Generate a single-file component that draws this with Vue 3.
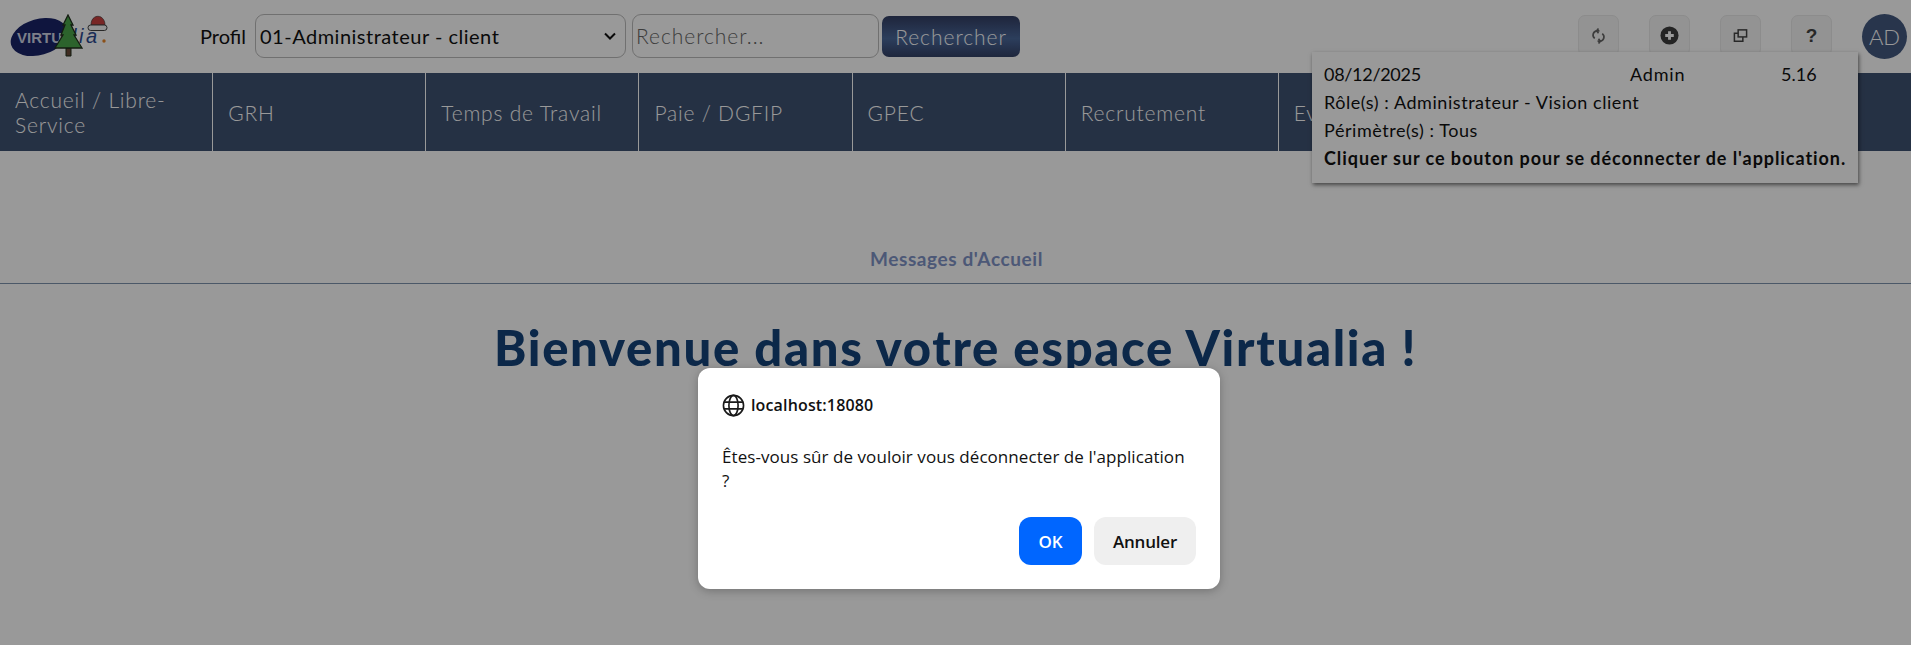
<template>
  <div class="page">
    <header class="topbar">
      <svg class="logo" viewBox="0 0 98 46" width="98" height="46">
        <ellipse cx="29" cy="23" rx="29" ry="18" transform="rotate(-16 29 23)" fill="#1a2468" />
        <text x="7" y="29" class="logo-virtu">VIRTU</text>
        <text x="62" y="29" class="logo-lia">lia</text>
        <path d="M56 34 h5 v8 h-5 Z" fill="#6b4a3a" stroke="#20301c" />
        <path d="M58 1 L63 11 L61 11 L66 21 L64 21 L72 34 L45 34 L53 21 L51 21 L55 11 L53 11 Z" fill="#4aa54a" stroke="#20301c" stroke-width="1.300" />
        <circle cx="94" cy="27" r="1.700" fill="#e8872b" />
        <path d="M81 11 C81 3 87 1 91 3 C94 5 95 8 95 11 Z" fill="#c8403f" stroke="#333" stroke-width="0.600" />
        <rect x="78" y="11" width="19" height="5.500" rx="2.700" fill="#f4f4f4" stroke="#444" />
      </svg>

      <label class="profil-label" for="profil">Profil</label>
      <select id="profil" class="profil-select">
        <option>01-Administrateur - client</option>
      </select>
      <input class="search" type="text" placeholder="Rechercher..." />
      <button class="search-btn" type="button">Rechercher</button>

      <div class="tools">
        <button class="tool" type="button" aria-label="Actualiser">
          <svg viewBox="0 0 16 18" width="15" height="18" fill="none" stroke="#666" stroke-width="1.800">
            <path d="M9 3.500H6.500A4.500 4.500 0 0 0 4 11.600" />
            <path d="M7 14.500h2.500A4.500 4.500 0 0 0 12 6.400" />
            <path d="M8 1l-2 2.500L8 6M8 12l2 2.500L8 17" />
          </svg>
        </button>
        <button class="tool" type="button" aria-label="Ajouter">
          <svg viewBox="0 0 20 20" width="19" height="19">
            <circle cx="10" cy="10" r="9.500" fill="#3c3c3c" />
            <path d="M10 5.500v9M5.500 10h9" stroke="#fff" stroke-width="3" />
          </svg>
        </button>
        <button class="tool" type="button" aria-label="Fenêtres">
          <svg viewBox="0 0 16 16" width="15" height="15" fill="none" stroke="#444" stroke-width="1.600">
            <rect x="5.500" y="2" width="9" height="7.500" />
            <path d="M5.500 5.500H1.500v8.500h9v-4.500" />
          </svg>
        </button>
        <button class="tool help" type="button">?</button>
        <button class="avatar" type="button">AD</button>
      </div>
    </header>

    <nav class="menu">
      <a v-for="item in menu" :key="item" class="menu-item">{{ item }}</a>
    </nav>

    <main class="content">
      <div class="messages">Messages d'Accueil</div>
      <h1 class="welcome">Bienvenue dans votre espace Virtualia !</h1>
    </main>

    <div class="tip">
      <div class="tip-row">
        <span class="tip-date">08/12/2025</span>
        <span class="tip-user">Admin</span>
        <span class="tip-version">5.16</span>
      </div>
      <div>Rôle(s) : Administrateur - Vision client</div>
      <div>Périmètre(s) : Tous</div>
      <div class="tip-strong">Cliquer sur ce bouton pour se déconnecter de l'application.</div>
    </div>

    <div class="overlay">
      <div class="dialog">
        <div class="dialog-origin">
          <svg viewBox="0 0 24 24" width="23" height="23" fill="none" stroke="#1a1a1a" stroke-width="1.700">
            <circle cx="12" cy="12" r="10.500" />
            <ellipse cx="12" cy="12" rx="4.800" ry="10.500" />
            <path d="M2 8.500h20M2 15.500h20" />
          </svg>
          <span>localhost:18080</span>
        </div>
        <p class="dialog-text">Êtes-vous sûr de vouloir vous déconnecter de l'application ?</p>
        <div class="dialog-actions">
          <button class="btn-ok" type="button">OK</button>
          <button class="btn-cancel" type="button">Annuler</button>
        </div>
      </div>
    </div>
  </div>
</template>

<script setup>
const menu = ['Accueil / Libre-Service', 'GRH', 'Temps de Travail', 'Paie / DGFIP', 'GPEC', 'Recrutement', 'Evaluations']
</script>

<style>
html, body {
  margin: 0;
  overflow: hidden;
}
</style>

<style scoped>
.page {
  position: relative;
  height: 645px;
  background: #fff;
  font-family: Lato, "Liberation Sans", sans-serif;
  color: #111;
  overflow: hidden;
}

.topbar {
  display: flex;
  align-items: center;
  height: 73px;
  box-sizing: border-box;
  padding: 0 4px 0 10px;
}

.logo {
  margin-right: 92px;
  flex: none;
}

.logo-virtu {
  font: 700 15px "Liberation Sans", sans-serif;
  fill: #d0d4e4;
}

.logo-lia {
  font: italic 400 20px "Liberation Sans", sans-serif;
  letter-spacing: 2.500px;
  fill: #2c4a90;
}

.profil-label {
  font-size: 20px;
  width: 55px;
  flex: none;
  margin-bottom: 2px;
}

.profil-select {
  appearance: none;
  width: 371px;
  height: 44px;
  border: 1px solid #bbb;
  border-radius: 9px;
  background: #fff url("data:image/svg+xml,%3Csvg xmlns='http://www.w3.org/2000/svg' width='12' height='8'%3E%3Cpath d='M1 1.500l5 5 5-5' fill='none' stroke='%23111' stroke-width='2'/%3E%3C/svg%3E") no-repeat right 9px center;
  font: 20px Lato, sans-serif;
  letter-spacing: 0.500px;
  color: #111;
  padding: 0 0 0 4px;
  margin-right: 6px;
  margin-bottom: 2px;
  flex: none;
}

.search {
  width: 247px;
  height: 44px;
  box-sizing: border-box;
  border: 1px solid #bbb;
  border-radius: 9px;
  font: 300 21px Lato, sans-serif;
  letter-spacing: 0.950px;
  padding: 0 3px;
  margin-right: 3px;
  margin-bottom: 2px;
  flex: none;
}

.search::placeholder {
  color: #666;
}

.search-btn {
  width: 138px;
  height: 41px;
  border: none;
  border-radius: 7px;
  background: linear-gradient(#333e63, #4a689a 55%, #334066);
  color: #fff;
  font: 300 21px Lato, sans-serif;
  letter-spacing: 0.950px;
  padding: 0;
  flex: none;
}

.tools {
  display: flex;
  align-items: flex-start;
  margin-left: auto;
}

.tool {
  width: 41px;
  height: 41px;
  margin-right: 30px;
  margin-top: 1px;
  padding: 0;
  border: 1px solid #e9e9e9;
  border-radius: 7px;
  background: #f6f6f6;
  display: flex;
  align-items: center;
  justify-content: center;
}

.help {
  font: 700 19px "Liberation Sans", sans-serif;
  color: #444;
}

.avatar {
  width: 45px;
  height: 45px;
  border: none;
  border-radius: 50%;
  background: #43597f;
  color: #fff;
  font: 300 22px Lato, sans-serif;
  padding: 0;
}

.menu {
  display: flex;
  height: 78px;
  background: #3f5272;
}

.menu-item {
  width: 213.150px;
  box-sizing: border-box;
  flex: none;
  display: flex;
  align-items: center;
  padding: 0 15px;
  border-right: 1px solid #fff;
  color: #fff;
  font-size: 21px;
  font-weight: 300;
  letter-spacing: 0.800px;
  line-height: 25px;
}

.messages {
  margin-top: 93px;
  height: 40px;
  box-sizing: border-box;
  border-bottom: 1px solid #7d93ae;
  text-align: center;
  font-size: 19px;
  font-weight: 700;
  letter-spacing: 0.600px;
  color: #7f93c6;
  line-height: 29px;
  padding-left: 2px;
}

.welcome {
  margin: 33px 0 0;
  text-align: center;
  font-family: Lato, sans-serif;
  font-size: 49px;
  font-weight: 900;
  line-height: 60px;
  letter-spacing: 1.700px;
  color: #15437b;
}

.tip {
  position: absolute;
  left: 1312px;
  top: 52px;
  width: 546px;
  height: 131px;
  box-sizing: border-box;
  padding: 8px 12px;
  background: #fff;
  box-shadow: 1px 2px 4px rgba(0, 0, 0, 0.55);
  font-size: 18px;
  line-height: 28px;
  letter-spacing: 0.550px;
}

.tip-row {
  display: flex;
}

.tip-date {
  width: 306px;
  letter-spacing: -0.300px;
}

.tip-user {
  width: 151px;
  letter-spacing: 0.800px;
}

.tip-version {
  letter-spacing: 0;
}

.tip-strong {
  font-weight: 700;
  letter-spacing: 0.930px;
  white-space: nowrap;
}

.overlay {
  position: absolute;
  inset: 0;
  background: rgba(0, 0, 0, 0.4);
}

.dialog {
  position: absolute;
  left: 698px;
  top: 368px;
  width: 522px;
  height: 221px;
  box-sizing: border-box;
  padding: 25px 24px 24px;
  background: #fff;
  border-radius: 12px;
  box-shadow: 0 2px 10px rgba(0, 0, 0, 0.25);
  font-family: "Open Sans", "Noto Sans", sans-serif;
  color: #111;
}

.dialog-origin {
  display: flex;
  align-items: center;
  gap: 6px;
  font-size: 16px;
  font-weight: 600;
  letter-spacing: 0.150px;
  height: 24px;
}

.dialog-text {
  margin: 28px 0 0;
  font-size: 17px;
  line-height: 24px;
  letter-spacing: 0.060px;
  width: 470px;
}

.dialog-actions {
  display: flex;
  justify-content: flex-end;
  gap: 12px;
  margin-top: 24px;
}

.dialog-actions button {
  height: 48px;
  border: none;
  border-radius: 12px;
  font-family: inherit;
  font-size: 17px;
  font-weight: 600;
  letter-spacing: -0.200px;
}

.btn-ok {
  width: 63px;
  background: #0066ff;
  color: #fff;
}

.btn-cancel {
  width: 102px;
  background: #efefef;
  color: #111;
}
</style>
